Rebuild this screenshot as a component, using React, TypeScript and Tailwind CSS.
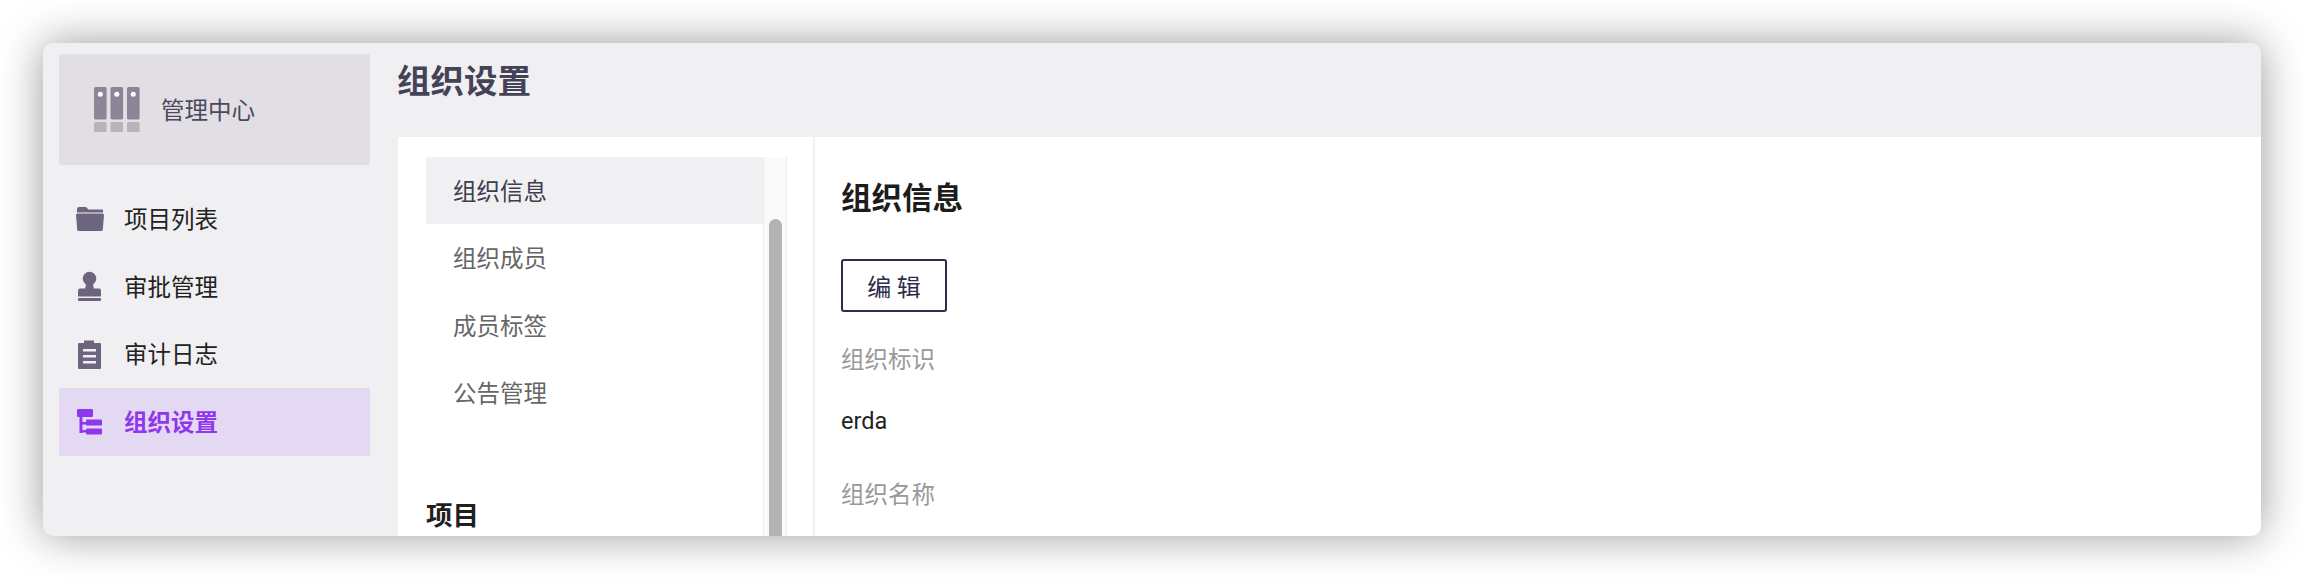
import React from "react";

const cjk = "font-['Noto_Sans_CJK_SC','Noto_Sans',sans-serif]";

function FolderIcon() {
  return (
    <svg width="32" height="32" viewBox="0 0 32 32" fill="currentColor">
      <path d="M4 7a2 2 0 0 1 2-2h7l2.500 2.500H30V10.500H4z" />
      <path d="M3 13a1.500 1.500 0 0 1 1.500-1.500h25A1.500 1.500 0 0 1 31 13l-1.200 14.500a1.500 1.500 0 0 1-1.500 1.500H5.700a1.500 1.500 0 0 1-1.500-1.500z" />
    </svg>
  );
}

function StampIcon() {
  return (
    <svg width="32" height="32" viewBox="0 0 32 32" fill="currentColor">
      <circle cx="16.500" cy="8.500" r="6.800" />
      <path d="M13 14h7l1 5.500H12z" />
      <path d="M7 18.500h19a2 2 0 0 1 2 2v6H5v-6a2 2 0 0 1 2-2z" />
      <rect x="5" y="28" width="23" height="3" rx="1" />
    </svg>
  );
}

function ClipboardIcon() {
  return (
    <svg width="32" height="32" viewBox="0 0 32 32" fill="currentColor">
      <path
        fillRule="evenodd"
        d="M11 2.500h10V5h6a1 1 0 0 1 1 1v24a1 1 0 0 1-1 1H6a1 1 0 0 1-1-1V6a1 1 0 0 1 1-1h5zM10 11v2.500h13V11zm0 6v2.500h13V17zm0 6v2.500h13V23z"
      />
    </svg>
  );
}

function TreeIcon() {
  return (
    <svg width="32" height="32" viewBox="0 0 32 32" fill="currentColor">
      <rect x="4" y="3" width="16" height="8" rx="1" />
      <rect x="6.500" y="10" width="3" height="17" />
      <rect x="8" y="16" width="6" height="2.500" />
      <rect x="8" y="24" width="6" height="2.500" />
      <rect x="13" y="13.500" width="16" height="6" rx="1" />
      <rect x="13" y="22.500" width="16" height="6" rx="1" />
    </svg>
  );
}

function LogoIcon() {
  return (
    <svg width="46" height="46" viewBox="0 0 46 46">
      {[0, 16.500, 33].map((x) => (
        <g key={x}>
          <rect x={x} y="0" width="12.600" height="32.500" rx="1.500" fill="#8c8598" />
          <circle cx={x + 6.300} cy="7.300" r="2.500" fill="#ffffff" />
          <rect x={x} y="35" width="12.600" height="10" rx="1.500" fill="#b7b3bd" />
        </g>
      ))}
    </svg>
  );
}

export default function App() {
  const Links = [
    { id: 1, text: "项目列表", icon: <FolderIcon /> },
    { id: 2, text: "审批管理", icon: <StampIcon /> },
    { id: 3, text: "审计日志", icon: <ClipboardIcon /> },
    { id: 4, text: "组织设置", icon: <TreeIcon />, active: true },
  ];
  const subLinks = ["组织信息", "组织成员", "成员标签", "公告管理"];

  return (
    <div className={"h-[579px] overflow-hidden bg-white pl-[43px] pt-[43px] " + cjk}>
      <div className="flex h-[493px] w-[2218px] overflow-hidden rounded-[10px] bg-[#f0f0f3] shadow-[0_0_44px_rgba(0,0,0,0.4)]">
        {/* sidebar */}
        <aside className="w-[355px] shrink-0 pl-[16px] pt-[11px]">
          <div className="flex h-[111px] w-[311px] items-center rounded-[3px] bg-[#e1dfe4] pl-[35px]">
            <LogoIcon />
            <span className="ml-[21px] text-[23.500px] text-[#4c4860]">管理中心</span>
          </div>
          <ul className="mt-[19.500px] w-[311px]">
            {Links.map((item) => (
              <li
                key={item.id}
                className={
                  item.active
                    ? "flex h-[67.800px] items-center gap-[19px] bg-[#e3d9f3] pl-[14px] text-[#9036ee]"
                    : "flex h-[67.800px] items-center gap-[19px] pl-[14px] text-[#6d6580]"
                }
              >
                {item.icon}
                <span
                  className={
                    item.active
                      ? "text-[23.500px] font-bold text-[#9036ee]"
                      : "text-[23.500px] text-[#222222]"
                  }
                >
                  {item.text}
                </span>
              </li>
            ))}
          </ul>
        </aside>

        <main className="flex min-w-0 flex-1 flex-col">
          <div className="h-[94px] shrink-0 pt-[15px]">
            <h1 className="ml-[-1px] text-[33.500px] leading-[42px] font-bold text-[#454258]">组织设置</h1>
          </div>

          <div className="flex min-h-0 flex-1 bg-white">
            {/* secondary menu */}
            <div className="flex w-[417px] shrink-0 border-r-2 border-[#f0f0f2] pl-[28px] pr-[26px] pt-[20px]">
              <div className="w-[337px] shrink-0">
                {subLinks.map((text, index) => (
                  <div
                    key={text}
                    className={
                      index === 0
                        ? "flex h-[67.300px] items-center rounded-l-[3px] bg-[#f0f0f3] pl-[27px] text-[23.500px] text-[#3f3c50]"
                        : "flex h-[67.300px] items-center pl-[27px] text-[23.500px] text-[#666666]"
                    }
                  >
                    {text}
                  </div>
                ))}
                <div className="mt-[71px] text-[26.500px] leading-[34px] font-bold text-[#1f1f1f]">项目</div>
              </div>
              <div className="w-[24px] shrink-0 border-x border-[#ececee] bg-[#fafafa] pt-[62px]">
                <div className="mx-auto h-[400px] w-[13px] rounded-full bg-[#b3b3b3]"></div>
              </div>
            </div>

            {/* form */}
            <div className="flex-1 pl-[26px] pt-[41px]">
              <h2 className="text-[30.500px] leading-[36px] font-bold text-[#1c1c1c]">组织信息</h2>
              <button className="mt-[45px] flex h-[53px] w-[106px] items-center justify-center rounded-[3px] border-2 border-[#2f2c4a] text-[24px] text-[#2f2c4a]">
                编 辑
              </button>
              <div className="mt-[29px] text-[23.500px] leading-[34px] text-[#999999]">组织标识</div>
              <div className="mt-[29px] font-['Roboto',sans-serif] text-[23.500px] leading-[34px] text-[#222222]">erda</div>
              <div className="mt-[38px] text-[23.500px] leading-[34px] text-[#999999]">组织名称</div>
            </div>
          </div>
        </main>
      </div>
    </div>
  );
}
